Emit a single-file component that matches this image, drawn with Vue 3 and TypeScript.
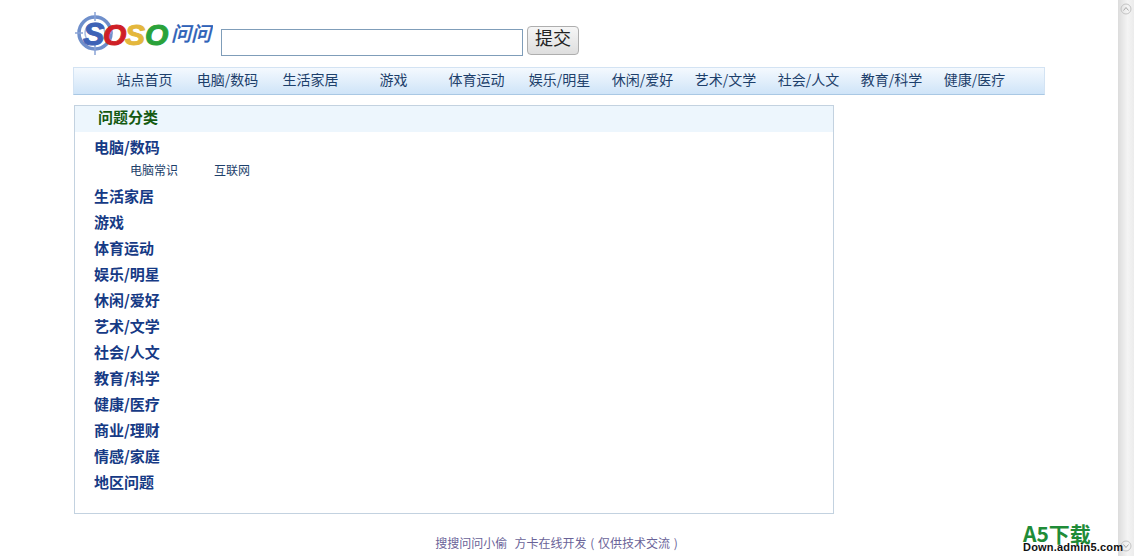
<script setup lang="ts">
const navItems: string[] = ['站点首页', '电脑/数码', '生活家居', '游戏', '体育运动', '娱乐/明星', '休闲/爱好', '艺术/文学', '社会/人文', '教育/科学', '健康/医疗']
const categories: string[] = ['生活家居', '游戏', '体育运动', '娱乐/明星', '休闲/爱好', '艺术/文学', '社会/人文', '教育/科学', '健康/医疗', '商业/理财', '情感/家庭', '地区问题']
</script>

<template>
  <div class="page">
    <main class="main">
      <header class="header">
        <svg class="logo" width="140" height="46" viewBox="0 0 140 46">
          <circle cx="22" cy="22" r="16" fill="none" stroke="#6f8fcb" stroke-width="3.5" />
          <circle cx="22" cy="22" r="10" fill="none" stroke="#a9bce2" stroke-width="1.5" />
          <path d="M22 1v9M22 34v10M2 22h8M34 22h6" stroke="#8ba4d6" stroke-width="1.5" fill="none" />
          <text x="10" y="34" class="logo-s" fill="#3d62b6" stroke="#3d62b6" stroke-width="1">S</text>
          <text x="30" y="34" class="logo-o" fill="#cf1f26" stroke="#cf1f26" stroke-width="1">O</text>
          <text x="52" y="34" class="logo-o" fill="#e4b73c" stroke="#e4b73c" stroke-width="1">S</text>
          <text x="72" y="34" class="logo-o" fill="#2aa23a" stroke="#2aa23a" stroke-width="1">O</text>
          <text x="98" y="30" class="logo-cn" fill="#2f62b8" stroke="#2f62b8" stroke-width="0.3">问问</text>
        </svg>
        <input class="search" type="text" />
        <button class="submit" type="button">提交</button>
      </header>

      <nav class="nav">
        <a v-for="item in navItems" :key="item" class="nav-item">{{ item }}</a>
      </nav>

      <section class="panel">
        <h2 class="panel-title">问题分类</h2>
        <div class="cats">
          <div class="cat first">电脑/数码</div>
          <div class="subs">
            <span class="sub">电脑常识</span>
            <span class="sub">互联网</span>
          </div>
          <div v-for="cat in categories" :key="cat" class="cat">{{ cat }}</div>
        </div>
      </section>

      <footer class="footer">搜搜问问小偷&nbsp; 方卡在线开发 ( 仅供技术交流 )</footer>
    </main>

    <div class="scrollbar">
      <span class="thumb-btn">
        <svg class="arrow" width="12" height="12" viewBox="0 0 12 12"><circle cx="6" cy="6" r="5" fill="none" stroke="#c4c4c4" /><path d="M3.5 7.5 6 4.5l2.5 3" fill="none" stroke="#a8a8a8" /></svg>
      </span>
      <span class="thumb-btn bottom">
        <svg class="arrow" width="12" height="12" viewBox="0 0 12 12"><circle cx="6" cy="6" r="5" fill="none" stroke="#c4c4c4" /><path d="M3.5 4.5 6 7.5l2.5-3" fill="none" stroke="#a8a8a8" /></svg>
      </span>
    </div>

    <div class="watermark">
      <div class="wm-top">A5下载</div>
      <div class="wm-bottom">Down.admin5.com</div>
    </div>
  </div>
</template>

<style>
html, body { margin: 0; padding: 0; background: #fff; overflow: hidden; }
</style>

<style scoped>
.page {
  position: relative;
  display: flex;
  height: 556px;
  overflow: hidden;
  font-family: "Noto Sans CJK SC", "Liberation Sans", sans-serif;
}
.main {
  width: 1118px;
  box-sizing: border-box;
  padding: 0 0 0 73px;
  flex: none;
}
.header {
  display: flex;
  align-items: flex-start;
  height: 67px;
}
.logo { flex: none; margin-top: 11px; margin-right: 8px; }
.logo-s { font: italic bold 32px "Liberation Sans", sans-serif; }
.logo-o { font: italic bold 30px "Liberation Sans", sans-serif; }
.logo-cn { font: italic 500 20px "Noto Sans CJK SC", sans-serif; }
.search {
  width: 302px;
  height: 27px;
  margin: 29px 4px 0 0;
  box-sizing: border-box;
  border: 1px solid #7f9db9;
  background: #fff;
  padding: 0;
}
.submit {
  width: 52px;
  height: 29px;
  margin-top: 26px;
  padding: 0 0 6px;
  border: 1px solid #aeaeae;
  border-radius: 4px;
  background: linear-gradient(#f6f6f6, #dedede);
  font: 18px/21px "Noto Sans CJK SC", sans-serif;
  color: #222;
}
.nav {
  display: flex;
  width: 972px;
  height: 28px;
  box-sizing: border-box;
  padding-left: 29px;
  border: 1px solid #d3e3f3;
  border-bottom-color: #a9c8e4;
  background: linear-gradient(#f4f9fe, #cfe4f8);
}
.nav-item {
  width: 83px;
  flex: none;
  text-align: center;
  font-size: 14px;
  line-height: 22px;
  color: #1d3f6b;
  white-space: nowrap;
}
.panel {
  width: 760px;
  height: 409px;
  margin: 10px 0 0 1px;
  box-sizing: border-box;
  border: 1px solid #c3d2e0;
}
.panel-title {
  margin: 0;
  height: 26px;
  padding-left: 23px;
  background: #edf6fd;
  font-size: 15px;
  line-height: 22px;
  font-weight: 700;
  color: #155a12;
}
.cats { padding: 2px 0 0 19px; }
.cat {
  height: 26px;
  font-size: 15px;
  line-height: 26px;
  font-weight: 700;
  color: #163a85;
}
.subs {
  display: flex;
  height: 23px;
  padding-left: 36px;
  font-size: 12px;
  line-height: 20px;
  color: #1d3f6b;
}
.sub { width: 84px; flex: none; }
.footer {
  margin-top: 21px;
  width: 967px;
  text-align: center;
  font-size: 12px;
  line-height: 16px;
  word-spacing: 1px;
  color: #6a6398;
}
.scrollbar {
  width: 16px;
  flex: none;
  height: 556px;
  display: flex;
  flex-direction: column;
  justify-content: space-between;
  align-items: center;
  background: linear-gradient(90deg, #dcdcdc, #f4f4f4 60%, #ececec);
}
.arrow { display: block; }
.thumb-btn { display: block; height: 12px; margin-top: 3px; }
.thumb-btn.bottom { margin: 0 0 4px; }
.watermark {
  position: absolute;
  left: 1023px;
  top: 523px;
  width: 104px;
}
.wm-top {
  font: 700 21px/20px "Noto Sans CJK SC", sans-serif;
  color: #1f8c38;
}
.wm-bottom {
  margin-top: -2px;
  font: 700 11px/13px "Liberation Sans", sans-serif;
  letter-spacing: 0.2px;
  color: #111;
  white-space: nowrap;
}
</style>
